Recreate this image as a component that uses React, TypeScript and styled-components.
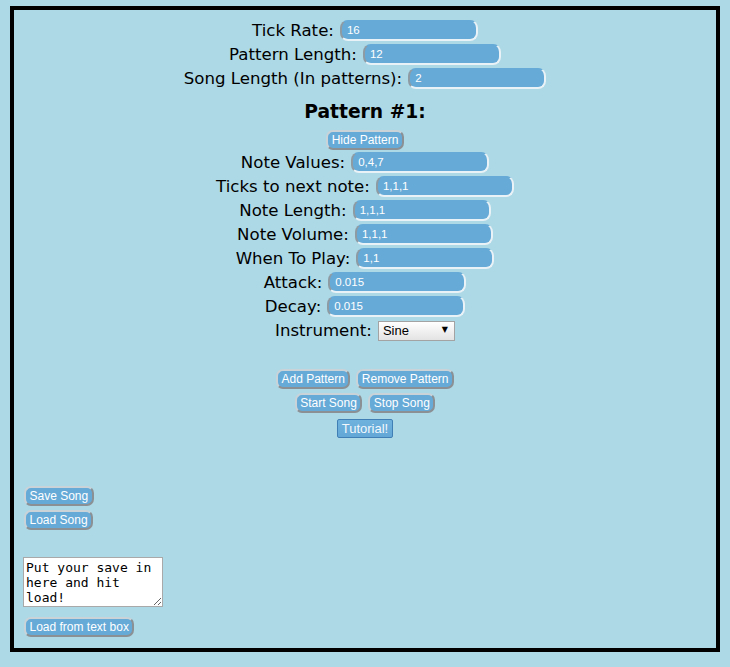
import React from "react";
import styled, { createGlobalStyle } from "styled-components";

const Global = createGlobalStyle`
  html, body { margin: 0; padding: 0; background: #add8e6; }
  #root { display: block; }
`;

const Frame = styled.div`
  box-sizing: border-box;
  margin: 6px 0 0 10px;
  width: 710px;
  height: 646px;
  border: 4px solid #000;
  display: flex;
  flex-direction: column;
  padding-top: 8px;
  font-family: "DejaVu Sans", Verdana, sans-serif;
  color: #000;
`;

const Center = styled.div`
  display: flex;
  flex-direction: column;
  align-items: center;
`;

const FieldRow = styled.div`
  height: 24px;
  display: flex;
  align-items: center;
  gap: 6px;
  font-size: 16.6px;
`;

const Label = styled.span`
  white-space: nowrap;
`;

const TextInput = styled.input`
  box-sizing: border-box;
  width: 138px;
  height: 21px;
  margin: 0;
  padding: 0 0 0 5px;
  background: #66aad7;
  color: #fff;
  font-family: "Liberation Sans", Arial, sans-serif;
  font-size: 11.5px;
  border-radius: 8px;
  border-style: solid;
  border-width: 1px 2px 2px 2px;
  border-color: #66aad7 #e9f2f6 #e9f2f6 #8e9ba3;
  outline: none;
`;

const Heading = styled.h3`
  margin: 10px 0 6px;
  height: 24px;
  line-height: 24px;
  font-size: 18.72px;
  font-weight: bold;
`;

const Button = styled.button<{ $mt?: number }>`
  box-sizing: border-box;
  height: 20px;
  margin: ${(p) => p.$mt ?? 0}px 0 0 0;
  padding: 0 3.5px;
  background: #66aad7;
  color: #fff;
  font-family: "Liberation Sans", Arial, sans-serif;
  font-size: 12px;
  line-height: 14px;
  border-radius: 7px;
  border-style: solid;
  border-width: 2px;
  border-color: #c9d3d8 #8b9094 #8b9094 #c9d3d8;
  white-space: nowrap;
  cursor: pointer;
`;

const TutorialButton = styled.button`
  box-sizing: border-box;
  height: 19px;
  margin-top: 6px;
  padding: 0 4px;
  background: linear-gradient(#70b2de, #62a7d6);
  color: #f2f8fc;
  font-family: "Liberation Sans", Arial, sans-serif;
  font-size: 13px;
  line-height: 15px;
  border: 1px solid #3f7fb5;
  border-radius: 2px;
  cursor: pointer;
`;

const ButtonRow = styled.div<{ $mt: number }>`
  display: flex;
  gap: 6px;
  margin-top: ${(p) => p.$mt}px;
`;

const SelectWrap = styled.span`
  position: relative;
  display: inline-block;
  width: 77px;
  height: 20px;
`;

const Select = styled.select`
  appearance: none;
  -webkit-appearance: none;
  box-sizing: border-box;
  width: 77px;
  height: 20px;
  margin: 0;
  padding: 0 0 0 4px;
  border: 1px solid #a3a3a3;
  border-radius: 0;
  background: linear-gradient(#ffffff, #e3e3e3);
  color: #000;
  font-family: "Liberation Sans", Arial, sans-serif;
  font-size: 13px;
  outline: none;
`;

const Arrow = styled.span`
  position: absolute;
  right: 7px;
  top: 3px;
  font-size: 8px;
  line-height: 14px;
  color: #000;
  pointer-events: none;
  font-family: "DejaVu Sans", sans-serif;
`;

const Left = styled.div`
  display: flex;
  flex-direction: column;
  align-items: flex-start;
  margin: 48px 0 0 10px;
`;

const SaveBox = styled.textarea`
  box-sizing: border-box;
  width: 140px;
  height: 50px;
  margin: 27px 0 0 -1px;
  padding: 2px;
  border: 1px solid #a9a9a9;
  background: #fff;
  color: #000;
  font-family: "DejaVu Sans Mono", monospace;
  font-size: 13px;
  line-height: 15px;
  resize: both;
  outline: none;
`;

const fields1: [string, string][] = [
  ["Tick Rate:", "16"],
  ["Pattern Length:", "12"],
  ["Song Length (In patterns):", "2"],
];

const fields2: [string, string][] = [
  ["Note Values:", "0,4,7"],
  ["Ticks to next note:", "1,1,1"],
  ["Note Length:", "1,1,1"],
  ["Note Volume:", "1,1,1"],
  ["When To Play:", "1,1"],
  ["Attack:", "0.015"],
  ["Decay:", "0.015"],
];

function Field({ label, value }: { label: string; value: string }) {
  return (
    <FieldRow>
      <Label>{label}</Label>
      <TextInput defaultValue={value} />
    </FieldRow>
  );
}

export default function App() {
  return (
    <>
      <Global />
      <Frame>
        <Center>
          {fields1.map(([l, v]) => (
            <Field key={l} label={l} value={v} />
          ))}
          <Heading>Pattern #1:</Heading>
          <Button>Hide Pattern</Button>
          {fields2.map(([l, v]) => (
            <Field key={l} label={l} value={v} />
          ))}
          <FieldRow>
            <Label>Instrument:</Label>
            <SelectWrap>
              <Select defaultValue="Sine">
                <option>Sine</option>
                <option>Square</option>
                <option>Sawtooth</option>
                <option>Triangle</option>
              </Select>
              <Arrow>▼</Arrow>
            </SelectWrap>
          </FieldRow>
          <ButtonRow $mt={27}>
            <Button>Add Pattern</Button>
            <Button>Remove Pattern</Button>
          </ButtonRow>
          <ButtonRow $mt={4}>
            <Button>Start Song</Button>
            <Button>Stop Song</Button>
          </ButtonRow>
          <TutorialButton>Tutorial!</TutorialButton>
        </Center>
        <Left>
          <Button>Save Song</Button>
          <Button $mt={4}>Load Song</Button>
          <SaveBox defaultValue={"Put your save in here and hit load!"} />
          <Button $mt={10}>Load from text box</Button>
        </Left>
      </Frame>
    </>
  );
}
